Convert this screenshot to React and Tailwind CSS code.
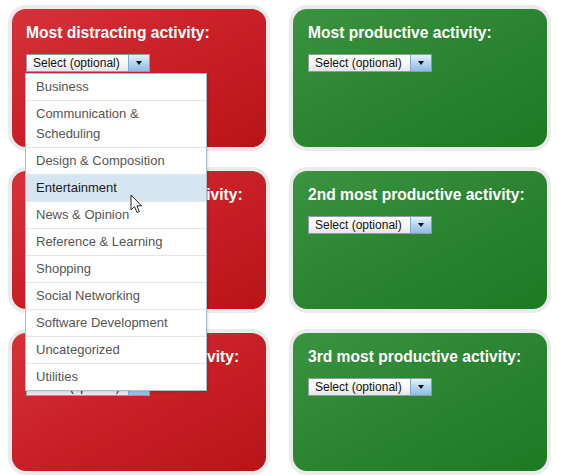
import React from "react";

const items = [
  "Business",
  "Communication & Scheduling",
  "Design & Composition",
  "Entertainment",
  "News & Opinion",
  "Reference & Learning",
  "Shopping",
  "Social Networking",
  "Software Development",
  "Uncategorized",
  "Utilities",
];

function SelectBox() {
  return (
    <div className="flex h-[18px] w-[124px] border border-[#8d9bab] bg-white">
      <div className="flex flex-1 items-center pl-[6px] text-[12px] leading-none text-[#111] bg-gradient-to-b from-white via-[#f8f8f8] to-[#e6e6e6]">
        Select (optional)
      </div>
      <div className="flex w-[21px] items-center justify-center border-l border-[#7fa6cb] bg-gradient-to-b from-[#e6f1fb] via-[#b7d4ee] to-[#8fbde6]">
        <span className="block h-0 w-0 border-x-[3px] border-t-[4px] border-x-transparent border-t-[#111]" />
      </div>
    </div>
  );
}

function Panel({ title, green }) {
  return (
    <div className="h-[146px] rounded-[18px] bg-[#ebebeb] p-[4px]">
      <div
        className={
          green
            ? "h-full rounded-[14px] bg-gradient-to-br from-[#3a943f] via-[#2a8430] to-[#1d7a23] px-[15px] pt-[14px]"
            : "h-full rounded-[14px] bg-gradient-to-br from-[#d6313a] via-[#c91f26] to-[#b81418] px-[14px] pt-[14px]"
        }
      >
        <div className="h-[20px] whitespace-nowrap text-[15.6px] font-bold leading-[20px] text-white">{title}</div>
        <div className="mt-[11px]">
          <SelectBox />
        </div>
      </div>
    </div>
  );
}

export default function App() {
  return (
    <div
      className="relative h-[475px] w-[561px] overflow-hidden bg-white"
      style={{ fontFamily: '"Liberation Sans", Arial, sans-serif' }}
    >
      <div className="grid grid-cols-[262px_262px] gap-x-[19px] gap-y-[16px] pl-[8px] pt-[5px]">
        <Panel title="Most distracting activity:" />
        <Panel title="Most productive activity:" green />
        <Panel title="2nd most distracting activity:" />
        <Panel title="2nd most productive activity:" green />
        <Panel title="3rd most distracting activity:" />
        <Panel title="3rd most productive activity:" green />
      </div>

      <ul className="absolute left-[25px] top-[73px] w-[182px] border border-[#a9c0d3] bg-white shadow-[1px_1px_2px_rgba(0,0,0,0.15)]">
        {items.map((it, i) => (
          <li
            key={it}
            className={
              (i === 3 ? "bg-[#d5e5f2] text-[#1a1a1a] " : "text-[#555] ") +
              (i < items.length - 1 ? "border-b border-[#e6e6e6] " : "") +
              "py-[3px] pl-[10px] pr-[6px] text-[13px] leading-[20px]"
            }
          >
            {it === "Communication & Scheduling" ? (
              <>
                Communication &amp;
                <br />
                Scheduling
              </>
            ) : (
              it
            )}
          </li>
        ))}
      </ul>

      <svg
        className="absolute left-[130px] top-[194px]"
        width="13"
        height="21"
        viewBox="0 0 13 21"
      >
        <path
          d="M1 1 L1 16 L4.5 12.5 L7 18.5 L9.3 17.5 L6.9 11.8 L11.5 11.8 Z"
          fill="#fff"
          stroke="#222"
          strokeWidth="1"
          strokeLinejoin="miter"
        />
      </svg>
    </div>
  );
}
